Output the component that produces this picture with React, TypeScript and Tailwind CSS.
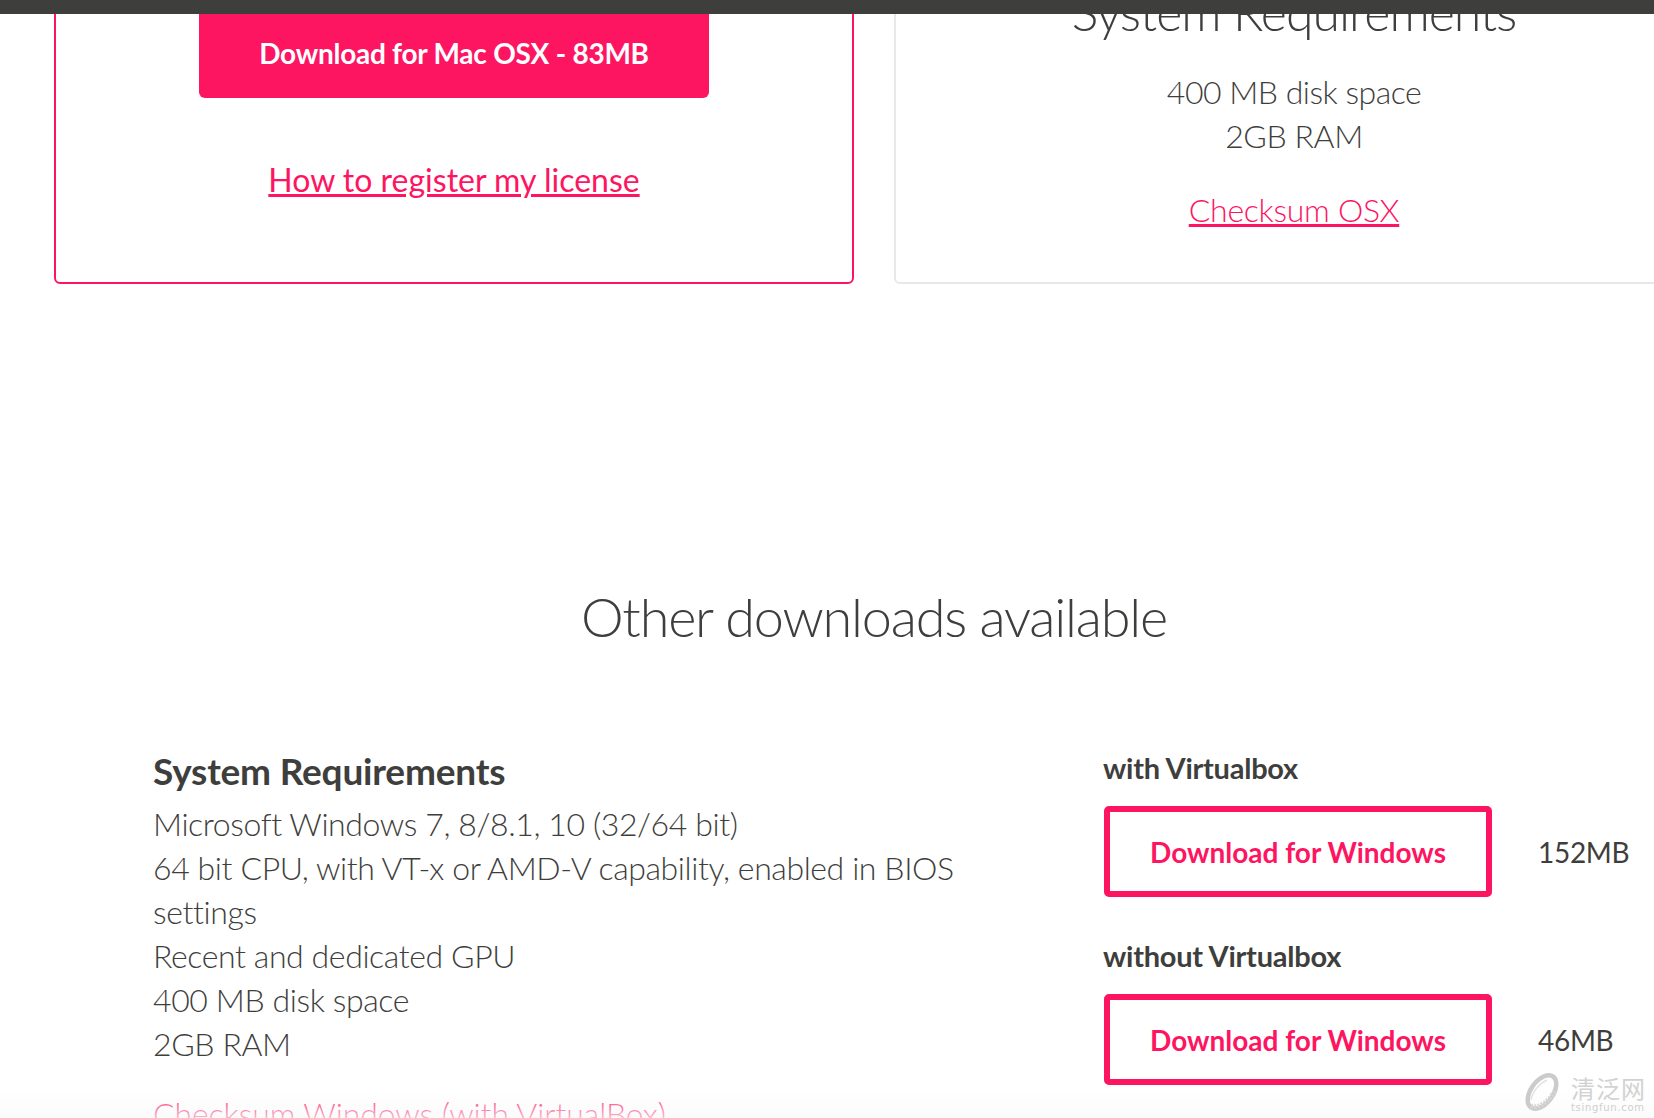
const lato = "font-['Lato','Liberation_Sans',sans-serif]";

function Watermark() {
  return (
    <div className="absolute bottom-0 left-0 right-0 h-[30px] bg-gradient-to-b from-transparent to-[#f9f9f9]/70">
      <div className="absolute right-[8px] bottom-[5px] flex items-end gap-[9px]">
        <svg width="40" height="42" viewBox="0 0 40 42">
          <ellipse cx="20" cy="21" rx="11" ry="19" transform="rotate(36 20 21)" fill="none" stroke="#cbcbcb" strokeWidth="4.5" />
          <path d="M9 35c7 3 17-3 24-15" fill="none" stroke="#d6d6d6" strokeWidth="5" strokeDasharray="2 1.5" />
          <path d="M9 29c1-8 9-17 16-20" fill="none" stroke="#e2e2e2" strokeWidth="1.5" />
        </svg>
        <div className="flex flex-col items-start gap-[2px]">
          <span className="text-[#d2d2d2] text-[24px] leading-[24px] tracking-[1px] font-['Noto_Sans_CJK_SC',sans-serif]">清泛网</span>
          <span className="text-[#cfcfcf] text-[10px] leading-[11px] tracking-[0.7px] font-['DejaVu_Sans',sans-serif]">tsingfun.com</span>
        </div>
      </div>
    </div>
  );
}

function DownloadRow({ label, size }: { label: string; size: string }) {
  return (
    <div>
      <h4 className="-ml-[1px] text-[29px] leading-[44px] tracking-[-0.25px] font-bold text-[#3e3e3c]">{label}</h4>
      <div className="flex items-center mt-[16px]">
        <a className="w-[388px] h-[91px] flex items-center justify-center border-[6px] border-[#fd1562] rounded-[5px] text-[28px] font-bold text-[#fd1562]">
          Download for Windows
        </a>
        <span className="ml-[46px] text-[28px] tracking-[-0.3px] text-[#3e3e3c]">{size}</span>
      </div>
    </div>
  );
}

export default function App() {
  return (
    <div className={`relative w-full h-[1118px] overflow-hidden bg-white ${lato}`}>
      <div className="absolute top-0 left-0 right-0 h-[14px] bg-[#3e3e3c] z-10" />

      <div className="flex gap-[40px] pl-[54px] -mt-[116px]">
        <div className="w-[800px] h-[400px] shrink-0 border-2 border-[#fd1562] rounded-[6px] flex flex-col items-center justify-end pb-[80px]">
          <a className="w-[510px] h-[90px] bg-[#fd1562] rounded-[6px] flex items-center justify-center text-white text-[28px] tracking-[-0.25px] font-bold">
            Download for Mac OSX - 83MB
          </a>
          <a className="mt-[60px] text-[32px] leading-[44px] text-[#fd1562] underline">How to register my license</a>
        </div>
        <div className="w-[800px] h-[400px] shrink-0 border-2 border-[#e8e8e8] rounded-[6px] flex flex-col items-center justify-end pb-[50px] font-light text-[#3e3e3c]">
          <h3 className="text-[50px] leading-[60px] tracking-[-1px]">System Requirements</h3>
          <p className="mt-[28px] text-[32px] leading-[44px] tracking-[-0.5px]">400 MB disk space</p>
          <p className="text-[32px] leading-[44px] tracking-[-0.4px]">2GB RAM</p>
          <a className="mt-[30px] text-[32px] leading-[44px] tracking-[-0.3px] text-[#fd1562] underline">Checksum OSX</a>
        </div>
      </div>

      <h2 className="mt-[299px] pl-[94px] text-center text-[54px] leading-[68px] tracking-[-1.2px] font-light text-[#3e3e3c]">
        Other downloads available
      </h2>

      <div className="flex mt-[92px] pl-[153px]">
        <div className="w-[810px] shrink-0 text-[#3e3e3c]">
          <h4 className="text-[37px] leading-[55px] tracking-[-0.2px] font-bold">System Requirements</h4>
          <div className="mt-[4px] text-[32px] leading-[44px] tracking-[-0.4px] font-light">
            <p>Microsoft Windows 7, 8/8.1, 10 (32/64 bit)</p>
            <p>64 bit CPU, with VT-x or AMD-V capability, enabled in BIOS settings</p>
            <p>Recent and dedicated GPU</p>
            <p>400 MB disk space</p>
            <p>2GB RAM</p>
          </div>
          <a className="block mt-[26px] text-[32px] leading-[44px] tracking-[-0.1px] font-light text-[#fd1562] underline">
            Checksum Windows (with VirtualBox)
          </a>
        </div>
        <div className="ml-[141px] mt-[3px] flex flex-col gap-[37px]">
          <DownloadRow label="with Virtualbox" size="152MB" />
          <DownloadRow label="without Virtualbox" size="46MB" />
        </div>
      </div>

      <Watermark />
    </div>
  );
}
